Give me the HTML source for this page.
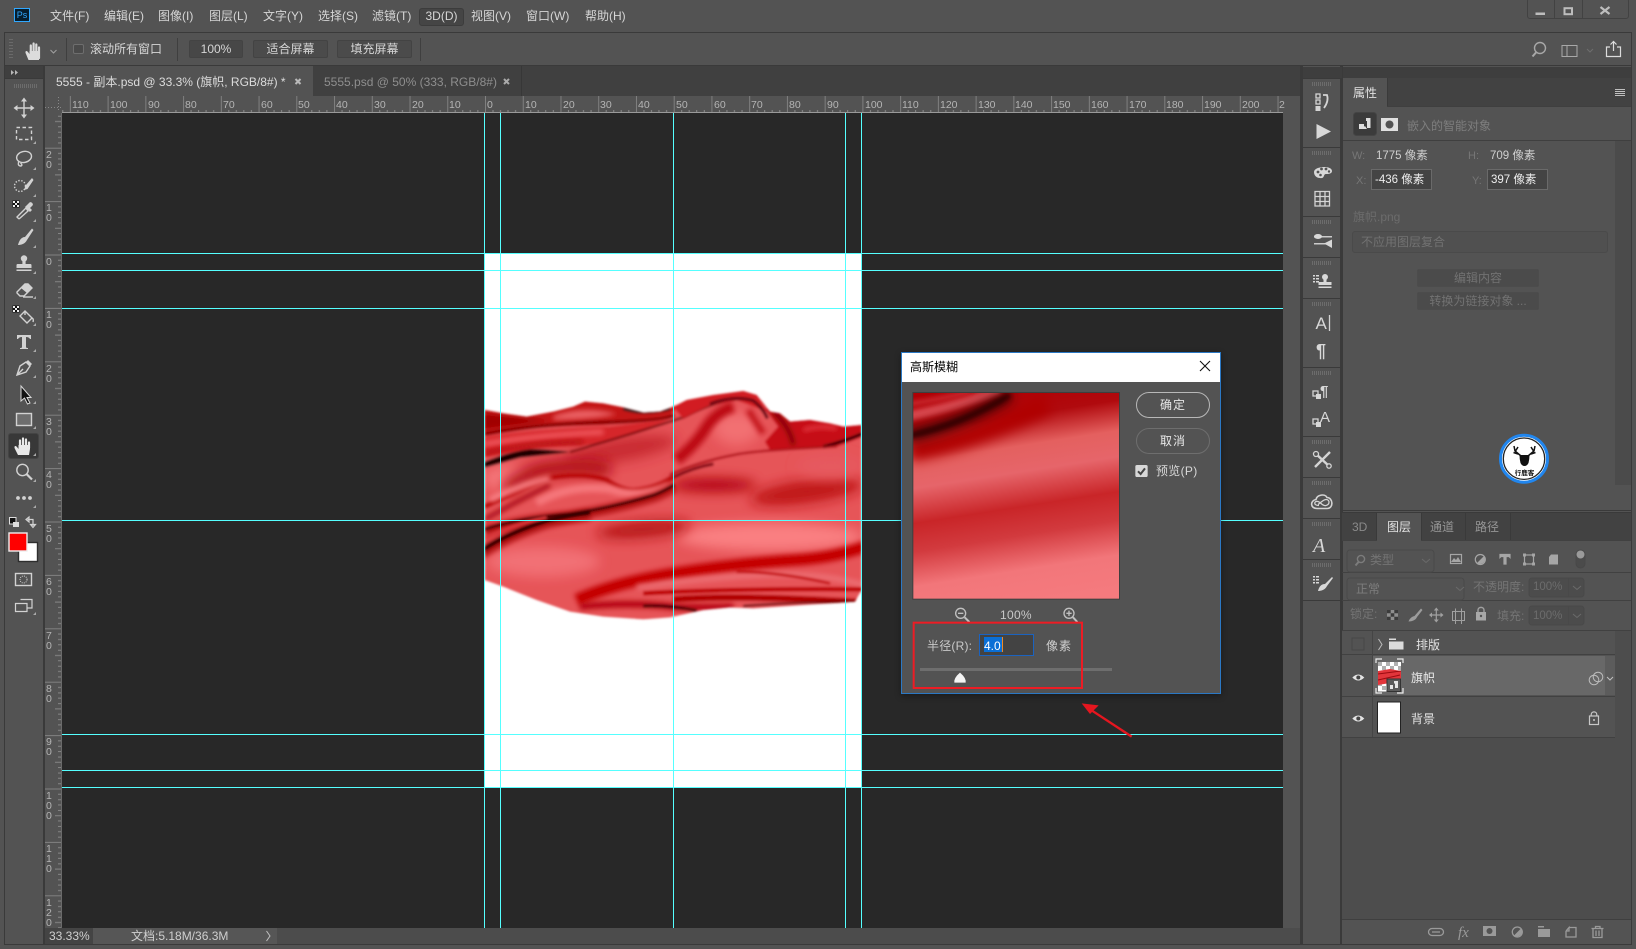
<!DOCTYPE html>
<html lang="zh"><head><meta charset="utf-8"><title>Photoshop</title>
<style>
html,body{margin:0;padding:0;background:#535353}
body{position:relative;width:1636px;height:949px;overflow:hidden;font:12px/16px "Liberation Sans","Noto Sans CJK SC",sans-serif;color:#d6d6d6}
div,span{position:absolute;box-sizing:border-box;white-space:nowrap}
.r{background:#3b3b3b}
.g{color:#767676}
.b{border:1px solid #434343;border-radius:2px;background:#474747;text-align:center;color:#d6d6d6}
svg{position:absolute;left:0;top:0}
text{font-family:"Liberation Sans","Noto Sans CJK SC",sans-serif}
</style></head><body>

<!-- frame regions -->
<div style="left:4px;top:32px;width:1628px;height:1px;background:#3a3a3a"></div>
<div style="left:4px;top:32px;width:1px;height:913px;background:#3a3a3a"></div>
<div style="left:1631px;top:32px;width:1px;height:913px;background:#3a3a3a"></div>
<div style="left:4px;top:944px;width:1628px;height:1px;background:#3a3a3a"></div>
<div style="left:4px;top:65px;width:1628px;height:1px;background:#3a3a3a"></div>

<!-- menu -->
<div style="left:14px;top:8px;width:16px;height:14px;background:#061e2e;border:1px solid #31a8ff;color:#31a8ff;font-size:9px;line-height:12px;text-align:center">Ps</div>
<span style="left:50px;top:8px">文件(F)</span>
<span style="left:104px;top:8px">编辑(E)</span>
<span style="left:158px;top:8px">图像(I)</span>
<span style="left:209px;top:8px">图层(L)</span>
<span style="left:263px;top:8px">文字(Y)</span>
<span style="left:318px;top:8px">选择(S)</span>
<span style="left:372px;top:8px">滤镜(T)</span>
<div style="left:419px;top:8px;width:45px;height:18px;background:#454545;border:1px solid #3c3c3c;border-radius:3px;text-align:center;line-height:15px">3D(D)</div>
<span style="left:471px;top:8px">视图(V)</span>
<span style="left:526px;top:8px">窗口(W)</span>
<span style="left:585px;top:8px">帮助(H)</span>
<div style="left:1527px;top:-2px;width:102px;height:21px;border:1px solid #424242;border-radius:3px"></div>
<div style="left:1554px;top:0;width:1px;height:19px;background:#424242"></div>
<div style="left:1582px;top:0;width:1px;height:19px;background:#424242"></div>

<!-- options -->
<span style="left:90px;top:41px">滚动所有窗口</span>
<div class="b" style="left:189px;top:40px;width:54px;height:18px;line-height:16px">100%</div>
<div class="b" style="left:253px;top:40px;width:75px;height:18px;line-height:16px;background:#4b4b4b">适合屏幕</div>
<div class="b" style="left:337px;top:40px;width:75px;height:18px;line-height:16px;background:#4b4b4b">填充屏幕</div>
<div style="left:73px;top:44px;width:11px;height:10px;border:1px solid #6e6e6e;border-radius:2px;background:#4a4a4a"></div>
<div class="r" style="left:66px;top:38px;width:1px;height:23px;background:#3f3f3f"></div>
<div class="r" style="left:177px;top:38px;width:1px;height:23px;background:#3f3f3f"></div>
<div class="r" style="left:420px;top:38px;width:1px;height:23px;background:#3f3f3f"></div>

<!-- left toolbar -->
<div style="left:5px;top:66px;width:38px;height:12px;background:#3f3f3f"></div>
<div style="left:43px;top:66px;width:2px;height:878px;background:#3a3a3a"></div>
<div style="left:5px;top:78px;width:38px;height:1px;background:#3a3a3a"></div>
<div style="left:8px;top:433px;width:31px;height:26px;background:#383838;border:1px solid #444;border-radius:3px"></div>

<!-- tabs -->
<div style="left:45px;top:66px;width:1257px;height:30px;background:#404040"></div>
<div style="left:45px;top:66px;width:268px;height:30px;background:#535353"></div>
<span style="left:56px;top:74px;color:#dcdcdc">5555 - 副本.psd @ 33.3% (旗帜, RGB/8#) *</span>
<span style="left:324px;top:74px;color:#8e8e8e">5555.psd @ 50% (333, RGB/8#)</span>
<div style="left:521px;top:66px;width:1px;height:30px;background:#373737"></div>

<!-- rulers & canvas -->
<div style="left:45px;top:96px;width:1257px;height:17px;background:#535353"></div>
<div style="left:45px;top:113px;width:17px;height:815px;background:#535353"></div>
<div style="left:62px;top:113px;width:1221px;height:815px;background:#282828"></div>
<div style="left:1283px;top:96px;width:19px;height:848px;background:#535353"></div>
<div style="left:1300px;top:66px;width:2px;height:878px;background:#3a3a3a"></div>
<!-- status -->
<div style="left:45px;top:928px;width:48px;height:16px;background:#444;color:#cfcfcf;line-height:16px;padding-left:4px">33.33%</div>
<div style="left:93px;top:928px;width:184px;height:16px;background:#565656"></div>
<div style="left:277px;top:928px;width:1023px;height:16px;background:#4c4c4c"></div>
<span style="left:131px;top:928px;color:#cfcfcf">文档:5.18M/36.3M</span>

<svg width="1636" height="949" viewBox="0 0 1636 949">
<defs>
<pattern id="hr" patternUnits="userSpaceOnUse" x="485" y="96" width="37.74" height="17">
<path d="M.5 0V17" stroke="#808080"/>
<path d="M8 14V17M15.5 14V17M23 14V17M30.6 14V17" stroke="#8c8c8c"/>
</pattern>
<pattern id="vr" patternUnits="userSpaceOnUse" x="45" y="254.5" width="17" height="53.4">
<path d="M0 .5H17" stroke="#808080"/>
<path d="M13 5.8H17M13 11.2H17M13 16.5H17M13 21.9H17M10 27.2H17M13 32.5H17M13 37.9H17M13 43.2H17M13 48.6H17" stroke="#858585"/>
</pattern>
<filter id="b0" filterUnits="userSpaceOnUse" x="-100" y="-100" width="1600" height="1200"><feGaussianBlur stdDeviation="3"/></filter>
<filter id="b1" filterUnits="userSpaceOnUse" x="-100" y="-100" width="1600" height="1200"><feGaussianBlur stdDeviation="2.5"/></filter>
<filter id="b2" filterUnits="userSpaceOnUse" x="-100" y="-100" width="1600" height="1200"><feGaussianBlur stdDeviation="7"/></filter>
<filter id="b3" filterUnits="userSpaceOnUse" x="-100" y="-100" width="1600" height="1200"><feGaussianBlur stdDeviation="18"/></filter>
<clipPath id="fc"><path d="M44 120L100 130 170 140 250 125 310 110 345 95 400 100 460 112 520 128 570 125 610 110 650 90 730 75 820 63 860 75 885 105 900 125 930 130 960 155 1020 150 1080 160 1120 170 1175 165V660L1155 695 1000 705 850 715 780 712 700 720 600 742 520 748 400 740 300 725 200 690 100 650 44 630Z"/></clipPath>
<clipPath id="dc"><rect x="44" y="0" width="1131" height="840"/></clipPath>
<clipPath id="pc"><rect x="68" y="157" width="621" height="621"/></clipPath>
<linearGradient id="pg" gradientUnits="userSpaceOnUse" x1="330" y1="150" x2="430" y2="790">
<stop offset="0" stop-color="#b00004"/><stop offset=".13" stop-color="#b00a0e"/><stop offset=".27" stop-color="#e4605f"/><stop offset=".39" stop-color="#e6656a"/><stop offset=".55" stop-color="#c92528"/><stop offset=".68" stop-color="#d23a3e"/><stop offset=".84" stop-color="#f2767a"/><stop offset="1" stop-color="#f57a7e"/>
</linearGradient>
</defs>

<!-- rulers -->
<rect x="62" y="96" width="1221" height="17" fill="url(#hr)"/>
<rect x="45" y="113" width="17" height="815" fill="url(#vr)"/>
<path d="M62 112.5H1283" stroke="#9a9a9a"/>
<path d="M61.5 113V928" stroke="#6a6a6a"/>
<path d="M45 107.5H61M58.5 97V112" stroke="#888" stroke-dasharray="1 2"/>
<g font-size="10.5" fill="#b4b4b4">
<text x="72" y="108">110</text><text x="110" y="108">100</text><text x="148" y="108">90</text><text x="185" y="108">80</text><text x="223" y="108">70</text><text x="261" y="108">60</text><text x="298" y="108">50</text><text x="336" y="108">40</text><text x="374" y="108">30</text><text x="412" y="108">20</text><text x="449" y="108">10</text><text x="487" y="108">0</text><text x="525" y="108">10</text><text x="563" y="108">20</text><text x="600" y="108">30</text><text x="638" y="108">40</text><text x="676" y="108">50</text><text x="714" y="108">60</text><text x="751" y="108">70</text><text x="789" y="108">80</text><text x="827" y="108">90</text><text x="865" y="108">100</text><text x="902" y="108">110</text><text x="940" y="108">120</text><text x="978" y="108">130</text><text x="1015" y="108">140</text><text x="1053" y="108">150</text><text x="1091" y="108">160</text><text x="1129" y="108">170</text><text x="1166" y="108">180</text><text x="1204" y="108">190</text><text x="1242" y="108">200</text><text x="1279" y="108">2</text>
</g>
<g font-size="10.5" fill="#b4b4b4">
<text x="46" y="158">2</text><text x="46" y="168">0</text>
<text x="46" y="211">1</text><text x="46" y="221">0</text>
<text x="46" y="265">0</text>
<text x="46" y="318">1</text><text x="46" y="328">0</text>
<text x="46" y="372">2</text><text x="46" y="382">0</text>
<text x="46" y="425">3</text><text x="46" y="435">0</text>
<text x="46" y="478">4</text><text x="46" y="488">0</text>
<text x="46" y="532">5</text><text x="46" y="542">0</text>
<text x="46" y="585">6</text><text x="46" y="595">0</text>
<text x="46" y="639">7</text><text x="46" y="649">0</text>
<text x="46" y="692">8</text><text x="46" y="702">0</text>
<text x="46" y="745">9</text><text x="46" y="755">0</text>
<text x="46" y="799">1</text><text x="46" y="809">0</text><text x="46" y="819">0</text>
<text x="46" y="852">1</text><text x="46" y="862">1</text><text x="46" y="872">0</text>
<text x="46" y="906">1</text><text x="46" y="916">2</text><text x="46" y="926">0</text>
</g>

<!-- document -->
<rect x="485" y="254" width="377" height="534" fill="#fff"/>
<g transform="translate(470 370) scale(.33333)" clip-path="url(#dc)">
<g filter="url(#b0)">
<g clip-path="url(#fc)">
<rect x="0" y="40" width="1200" height="720" fill="#e65458"/>
<!-- soft large tones -->
<ellipse cx="1010" cy="365" rx="170" ry="34" fill="#bf1418" filter="url(#b3)" transform="rotate(-8 1010 365)"/>
<ellipse cx="730" cy="345" rx="130" ry="20" fill="#b00408" filter="url(#b3)"/>
<ellipse cx="900" cy="500" rx="280" ry="42" fill="#fa8082" filter="url(#b3)"/>
<ellipse cx="220" cy="575" rx="170" ry="46" fill="#f27074" filter="url(#b3)"/>
<ellipse cx="520" cy="478" rx="140" ry="24" fill="#b51519" filter="url(#b3)" transform="rotate(-5 520 478)"/>
<ellipse cx="450" cy="240" rx="170" ry="34" fill="#c92a30" filter="url(#b3)" transform="rotate(-10 450 240)"/>
<ellipse cx="110" cy="325" rx="70" ry="36" fill="#f6787c" filter="url(#b3)"/>
<ellipse cx="1080" cy="290" rx="100" ry="36" fill="#e65a5e" filter="url(#b3)"/>
<ellipse cx="800" cy="175" rx="70" ry="50" fill="#f27072" filter="url(#b3)"/>
<!-- top stripes -->
<path d="M30 100H170L310 100 345 85 460 100 520 115 630 90 600 140 400 165 200 170 30 200Z" fill="#c41219" filter="url(#b1)"/>
<path d="M250 138Q340 105 440 132 380 148 250 150Z" fill="#ea6064" filter="url(#b2)"/>
<path d="M30 130L170 145 240 152 30 180Z" fill="#a00000" filter="url(#b2)"/>
<path d="M44 192Q200 162 400 157T610 134" stroke="#8a0006" stroke-width="10" fill="none" filter="url(#b1)"/>
<path d="M30 203Q200 175 420 170L600 148 520 182 380 222 200 234 30 264Z" fill="#d6262c" filter="url(#b1)"/>
<path d="M44 222Q200 196 400 186" stroke="#f0585e" stroke-width="16" fill="none" filter="url(#b2)"/>
<path d="M44 250Q170 218 340 216" stroke="#b4080e" stroke-width="13" fill="none" filter="url(#b2)"/>
<path d="M460 116Q520 136 600 116" stroke="#222" stroke-width="8" fill="none" filter="url(#b1)"/>
<!-- main dark crease -->
<path d="M300 246Q340 236 360 228 500 188 640 142 720 100 800 85" stroke="#7a0a10" stroke-width="6" fill="none" filter="url(#b1)"/>
<path d="M30 282Q110 247 180 238 220 238 300 246L150 262 30 296Z" fill="#1a0002" filter="url(#b1)"/>
<!-- hump -->
<path d="M610 112L650 88 730 72 820 60 860 72 892 125 800 90 720 105 640 145Z" fill="#d21a24" filter="url(#b1)"/>
<path d="M720 102Q790 75 850 92 880 115 892 145" stroke="#5c060c" stroke-width="8" fill="none" filter="url(#b1)"/>
<path d="M620 270Q680 220 710 170 740 125 790 110" stroke="#be0e14" stroke-width="34" fill="none" filter="url(#b2)"/>
<path d="M835 120Q860 160 880 190" stroke="#c4141a" stroke-width="20" fill="none" filter="url(#b2)"/>
<!-- right top -->
<path d="M885 115L930 122 960 150 1020 143 1080 153 1120 163 1190 158V195L1100 230 900 240 885 215 925 170Z" fill="#c60c14" filter="url(#b1)"/>
<path d="M1060 230Q1120 216 1190 186" stroke="#2a0306" stroke-width="8" fill="none" filter="url(#b1)"/>
<path d="M910 125Q960 170 970 225" stroke="#780006" stroke-width="12" fill="none" filter="url(#b2)"/>
<path d="M1000 180Q1050 165 1100 175" stroke="#e8424a" stroke-width="10" fill="none" filter="url(#b2)"/>
<path d="M600 314Q680 276 800 253 860 241 1100 229" stroke="#aa0c12" stroke-width="6" fill="none" filter="url(#b1)"/>
<path d="M610 322Q670 292 730 282" stroke="#7a060c" stroke-width="8" fill="none" filter="url(#b1)"/>
<!-- folds middle -->
<path d="M110 360Q180 300 250 295 350 285 420 300" stroke="#b00c12" stroke-width="44" fill="none" filter="url(#b3)"/>
<path d="M44 410Q130 370 230 325 340 305 410 330 450 358 490 360 560 355 610 320" stroke="#bc0a10" stroke-width="15" fill="none" filter="url(#b1)"/>
<path d="M60 390Q150 345 240 325" stroke="#f88084" stroke-width="18" fill="none" filter="url(#b2)"/>
<path d="M200 398Q300 342 420 357 500 387 600 347" stroke="#f6787c" stroke-width="24" fill="none" filter="url(#b2)"/>
<path d="M44 448Q130 400 240 345" stroke="#a0040a" stroke-width="12" fill="none" filter="url(#b2)"/>
<path d="M44 484Q140 450 300 438 430 418 550 382 580 371 612 351" stroke="#b00a10" stroke-width="28" fill="none" filter="url(#b2)"/>
<path d="M30 552Q110 497 230 458 300 442 360 434" stroke="#ac0a10" stroke-width="32" fill="none" filter="url(#b2)"/>
<path d="M44 478Q140 445 300 432 430 412 550 376 580 365 612 345" stroke="#3a0004" stroke-width="8" fill="none" filter="url(#b1)"/>
<path d="M30 545Q110 490 230 452 300 436 360 428" stroke="#300003" stroke-width="12" fill="none" filter="url(#b1)"/>
<path d="M44 505Q130 462 230 442" stroke="#d83438" stroke-width="10" fill="none" filter="url(#b1)"/>
<!-- bottom bands -->
<path d="M320 690Q430 640 600 612 800 580 1000 568 1100 560 1190 528" stroke="#c40006" stroke-width="36" fill="none" filter="url(#b2)"/>
<path d="M500 652Q700 622 900 614 1080 612 1190 648" stroke="#ec7074" stroke-width="16" fill="none" filter="url(#b2)"/>
<path d="M520 670Q800 655 1190 658" stroke="#bc0006" stroke-width="12" fill="none" filter="url(#b1)"/>
<path d="M800 605Q920 605 1080 640" stroke="#c00a10" stroke-width="7" fill="none" filter="url(#b1)"/>
<path d="M610 688Q800 674 1170 696" stroke="#b00006" stroke-width="18" fill="none" filter="url(#b1)"/>
<path d="M330 710Q480 695 610 710 700 714 790 710" stroke="#b40008" stroke-width="20" fill="none" filter="url(#b2)"/>
<path d="M520 708Q600 705 680 722" stroke="#400002" stroke-width="8" fill="none" filter="url(#b1)"/>
<path d="M820 708Q980 696 1155 694" stroke="#500004" stroke-width="5" fill="none" filter="url(#b1)"/>
</g>
</g>
</g>

<!-- guides -->
<g stroke="#55ffff" stroke-width="1" shape-rendering="crispEdges">
<path d="M62 253.5H1283M62 270.5H1283M62 308.5H1283M62 520.5H1283M62 734.5H1283M62 770.5H1283M62 787.5H1283"/>
<path d="M484.5 113V928M500.5 113V928M673.5 113V928M845.5 113V928M861.5 113V928"/>
</g>

<!-- status chevron -->
<path d="M266.5 931L270 936 266.5 941" fill="none" stroke="#c0c0c0"/>

<!-- tab closes + option icons -->
<g stroke="#b9b9b9" stroke-width="2"><path d="M295.5 79L300.5 84M300.5 79L295.5 84"/></g>
<g stroke="#aaa" stroke-width="2"><path d="M504 79L509 84M509 79L504 84"/></g>

<!-- hand option -->
<g transform="translate(34 51)" fill="#dcdcdc" stroke="#dcdcdc">
<path d="M-5.5 9L-8 3C-9.5 0-7.5-1-6 1L-4.5 3V0H5V9Z" stroke="none"/>
<path d="M-3.2 3V-5.5M-.4 3V-7.5M2.3 3V-6.5M5 3V-3.5M5 3V7" stroke-width="2.2" stroke-linecap="round" fill="none"/>
</g>
<path d="M50.5 50L53.5 53L56.5 50" fill="none" stroke="#a0a0a0"/>
<path d="M11 39V60" stroke="#6a6a6a" stroke-width="4" stroke-dasharray="1 2"/>
<g fill="none" stroke="#a8a8a8" stroke-width="1.4">
<circle cx="1540" cy="48" r="5.5"/><path d="M1536 52.5L1532.5 56.5" stroke-width="2"/>
</g>
<path d="M1562 45.5H1577V56.5H1562ZM1567 45.5V56.5" fill="none" stroke="#a8a8a8"/>
<path d="M1587 49L1590 52L1593 49" fill="none" stroke="#6e6e6e"/>
<path d="M1610 47H1606.5V56.5H1620.5V47H1617M1613.5 51V41.5M1610.5 44.5L1613.5 41.5L1616.5 44.5" fill="none" stroke="#dcdcdc" stroke-width="1.2"/>
<!-- window controls -->
<rect x="1535.5" y="12.5" width="9.5" height="2.5" fill="#bdbdbd"/>
<rect x="1564.5" y="8.2" width="7.5" height="6" fill="none" stroke="#bdbdbd" stroke-width="2"/>
<path d="M1600.5 7L1609.5 14M1609.5 7L1600.5 14" stroke="#bdbdbd" stroke-width="2.2"/>

<!-- collapse arrows -->
<g fill="#b8b8b8">
<path d="M11 70l3 2.5-3 2.5zM15 70l3 2.5-3 2.5z"/>
<path d="M1333 70l-3 2.5 3 2.5zM1328.5 70l-3 2.5 3 2.5z"/>
<path d="M1618 70l3 2.5-3 2.5zM1622 70l3 2.5-3 2.5z"/>
</g>
<!-- toolbar gripper -->
<path d="M14 86H38" stroke="#6c6c6c" stroke-width="4" stroke-dasharray="1 1"/>

<!-- TOOLBAR ICONS -->
<g fill="none" stroke="#d2d2d2" stroke-width="1.4">
<g transform="translate(24 108)"><path d="M0-8V8M-8 0H8"/><path d="M0-10.5L-3-6.5H3ZM0 10.5L-3 6.5H3ZM-10.5 0L-6.5-3V3ZM10.5 0L6.5-3V3Z" fill="#d2d2d2" stroke="none"/></g>
<rect x="16.5" y="127.5" width="15" height="12" stroke-dasharray="3.5 2.5"/>
<g transform="translate(24 159)"><ellipse cx=".5" cy="-2" rx="7.5" ry="5.5" transform="rotate(-12)"/><path d="M-5 2Q-7 7-3 7-1 6-3.5 4"/></g>
<g transform="translate(24 186)"><circle cx="-4" cy="0" r="5.5" stroke-dasharray="1.4 1.6"/><path d="M8-8L2-1 0 4 3.5 3 9.5-6Z" fill="#d2d2d2" stroke="none"/></g>
<g transform="translate(24 211)"><path d="M-5 8L-7 6 2-3 4 0 -5 8" /><path d="M1-4L3-6 5.5-8.5C7-10 10-7 8.5-5.5L6-3 8 -1 6 1 -1-6Z" fill="#d2d2d2" stroke="none"/></g>
<g transform="translate(24 238)"><path d="M8-9.5L1-1C-3-1-5 3-6 7-3 7 1 6 3 2L9.5-8Z" fill="#d2d2d2" stroke="none"/></g>
<g transform="translate(24 264)" fill="#d2d2d2" stroke="none"><circle cx="0" cy="-5.5" r="3.2"/><path d="M-1.6-3V0H-6.5Q-7.5 0-7.5 1.5V4H7.5V1.5Q7.5 0 6.5 0H1.6V-3ZM-7.5 5.5H7.5V7H-7.5Z"/></g>
<g transform="translate(24 290)"><path d="M-7 2L1-6H4L8-2 0 6H-4L-7 3Z"/><path d="M1-6H4L8-2 3 3-3-2Z" fill="#d2d2d2" stroke="none"/><path d="M-1 7H9"/></g>
<g transform="translate(24 316)"><path d="M-4 0L1-5 8 2 3 7Z"/><path d="M1-5V-1M8 2Q10 3 9 6"/></g>
<g transform="translate(16 309)"><rect x="-3.5" y="-3.5" width="7" height="7" fill="#111" stroke="none"/><path d="M-3-3h2v2h-2zM1-3h2v2h-2zM-1-1h2v2h-2zM-3 1h2v2h-2zM1 1h2v2h-2z" fill="#eee" stroke="none"/></g>
<g transform="translate(16 204)"><rect x="-3.5" y="-3.5" width="7" height="7" fill="#111" stroke="none"/><path d="M-3-3h2v2h-2zM1-3h2v2h-2zM-1-1h2v2h-2zM-3 1h2v2h-2zM1 1h2v2h-2z" fill="#eee" stroke="none"/></g>
<g transform="translate(24 342)"><path d="M-7-7H7V-3H6Q5-5 2-5V5Q2 6 4 6V7H-4V6Q-2 6-2 5V-5Q-5-5-6-3H-7Z" fill="#d2d2d2" stroke="none"/></g>
<g transform="translate(24 368)"><path d="M-7 7L-4 -2 2-6 6-2 2 4Z"/><path d="M2-6L4-8 8-4 6-2Z" fill="#d2d2d2" stroke="none"/><path d="M-7 7L-1 1"/></g>
<path d="M21 386V401L24.5 398 27.5 404 30 403 27 397.5H31Z" fill="#111" stroke="#d8d8d8" stroke-width="1"/>
<rect x="16.5" y="413.5" width="15" height="12" fill="#6e6e6e"/>
<g transform="translate(24 446)"><path d="M-6 9L-9 3C-10.5 0-8.5-1-7 1L-5.5 3V-1H6V3L5 9Z" fill="#e8e8e8" stroke="none"/><path d="M-4 2V-5.5M-1-1V-7.5M2-1V-6.5M5 2V-3.5" stroke="#e8e8e8" stroke-width="2.2" stroke-linecap="round"/></g>
<g transform="translate(24 471.5)"><circle cx="-1.5" cy="-1.5" r="5.7"/><path d="M2.5 2.5L8 8" stroke-width="2.2"/></g>
<g fill="#d2d2d2" stroke="none"><circle cx="18" cy="498" r="1.9"/><circle cx="24" cy="498" r="1.9"/><circle cx="30" cy="498" r="1.9"/></g>
<!-- corner triangles -->
<g fill="#aaa" stroke="none"><path d="M33 144h3v-3zM33 170h3v-3zM33 197h3v-3zM33 222h3v-3zM33 248h3v-3zM33 274h3v-3zM33 299h3v-3zM33 326h3v-3zM33 352h3v-3zM33 378h3v-3zM33 404h3v-3zM33 429h3v-3zM33 456h3v-3zM33 482h3v-3zM33 508h3v-3zM33 615h3v-3z"/></g>
<rect x="9.5" y="517.5" width="6.5" height="6.5" fill="#111" stroke="#ddd" stroke-width="1"/>
<rect x="13" y="522" width="6" height="5" fill="#ddd" stroke="none"/>
<path d="M27.5 519.5H33V526M26 519.5l3-2.5v5zM33 527.5l-2.5-3h5z" stroke-width="1.2"/>
<!-- colours -->
<rect x="18.5" y="542.5" width="19" height="19" fill="#fff" stroke="#2e2e2e"/>
<rect x="9" y="533" width="18" height="18" fill="#f00" stroke="#eee" stroke-width="1.4"/>
<rect x="15.5" y="573.5" width="16" height="12" stroke="#d2d2d2"/><circle cx="23.5" cy="579.5" r="3.5" stroke-dasharray="1 1.1" stroke-width="1"/>
<path d="M20.5 599.5H32V608H27.5M15.5 603.5H27V611.5H15.5Z" stroke-width="1.2"/>
</g>

<!-- RIGHT STRIP -->
<g stroke="#3a3a3a"><path d="M1302 78.5H1342M1302 147.5H1341M1302 216.5H1341M1302 257.5H1341M1302 298.5H1341M1302 367.5H1341M1302 436.5H1341M1302 477.5H1341M1302 518.5H1341M1302 559.5H1341M1302 600.5H1341"/><path d="M1341 66V944" stroke-width="2"/><path d="M1302.5 66V944"/></g>
<rect x="1303" y="67" width="328" height="11" fill="#3e3e3e"/>
<path d="M1312 84H1331M1312 153H1331M1312 222H1331M1312 263H1331M1312 304H1331M1312 373H1331M1312 442H1331M1312 483H1331M1312 524H1331M1312 565H1331" stroke="#6c6c6c" stroke-width="4" stroke-dasharray="1 1"/>
<g fill="none" stroke="#d4d4d4" stroke-width="1.3">
<g transform="translate(1322 102)"><rect x="-6" y="-8" width="4" height="4"/><rect x="-6" y="-2" width="4" height="4"/><rect x="-6.5" y="4" width="5" height="5" fill="#d4d4d4" stroke="none"/><path d="M1-7H5Q7-1 2 6"  stroke-width="1.8"/></g>
<path d="M1316.5 124L1331 131.5 1316.5 139Z" fill="#d8d8d8" stroke="none"/>
<g transform="translate(1323 172)"><path d="M-9 0C-9-6 9-7 9-1 9 2 5 2 3 2 0 2 2 7-3 6-7 6-9 3-9 0Z" fill="#d8d8d8" stroke="none"/><g fill="#535353" stroke="none"><circle cx="-5" cy="0" r="1.4"/><circle cx="-1.5" cy="-3" r="1.4"/><circle cx="3" cy="-3" r="1.4"/><circle cx="6" cy="-.5" r="1.2"/><circle cx="-2.5" cy="3" r="1.3"/></g></g>
<path d="M1315 191.5H1329.5V206H1315ZM1315 196.5H1329.5M1315 201.5H1329.5M1320 191.5V206M1325 191.5V206"/>
<g transform="translate(1323 240)" fill="#d8d8d8" stroke="none"><path d="M-9-4H9V-2.5H-9ZM-9 3H9V4.5H-9Z" opacity=".9"/><ellipse cx="-5" cy="-3.5" rx="4" ry="2.5"/><path d="M1 3.5L9 -.5V8Z"/></g>
<g transform="translate(1325 281)" fill="#d8d8d8" stroke="none"><circle cx="0" cy="-4" r="3"/><path d="M-1.5-2V1H-6.5V4H6.5V1H1.5V-2ZM-6.5 5.5H6.5V7H-6.5Z"/><path d="M-12-6h2v1.5h-2zM-9-6h3v1.5h-3zM-12-3h2v1.5h-2zM-9-3h3v1.5h-3zM-12 0h2v1.5h-2zM-9 0h3v1.5h-3z"/></g>
<text x="1315.5" y="329" font-size="17" fill="#d8d8d8" stroke="none">A</text><path d="M1329.5 315V331" />
<text x="1316" y="357" font-size="18" font-weight="bold" fill="#d8d8d8" stroke="none">¶</text>
<g transform="translate(1322 391)"><rect x="-9" y="0" width="5" height="5"/><rect x="-6" y="3" width="5" height="5" fill="#d8d8d8" stroke="none"/><text x="-2" y="5" font-size="15" font-weight="bold" fill="#d8d8d8" stroke="none">¶</text></g>
<g transform="translate(1322 419)"><rect x="-9" y="0" width="5" height="5"/><rect x="-6" y="3" width="5" height="5" fill="#d8d8d8" stroke="none"/><text x="-2" y="3" font-size="15" fill="#d8d8d8" stroke="none">A</text></g>
<g transform="translate(1322 460)"><path d="M-7-7L8 7M8-8L-7 7" stroke-width="2.4"/><circle cx="-6" cy="-6" r="2.5" fill="#535353"/><circle cx="7" cy="6" r="2.2" fill="#535353"/></g>
<g transform="translate(1322 501.5)"><path d="M-5 7C-12 7-12-1-6-2-5-7 3-8 5-4 11-4 12 7 5 7Z" stroke-width="1.6"/><path d="M-3 4C-9 4-8-1-4 0-1 1 1 5 4 4 8 3 8-2 4-2 1-2-2 2-4 3" stroke-width="1.3"/></g>
<text x="1313" y="552" font-size="20" font-style="italic" fill="#d8d8d8" stroke="none" style="font-family:'Liberation Serif',serif">A</text>
<g transform="translate(1323 584)" fill="#d8d8d8" stroke="none"><path d="M9-7L2 0C-2 0-4 3-5 7-2 7 2 6 4 2L10-6Z"/><path d="M-10-8h2v1.5h-2zM-7-8h3v1.5h-3zM-10-5h2v1.5h-2zM-7-5h3v1.5h-3zM-10-2h2v1.5h-2zM-7-2h3v1.5h-3z"/></g>
</g>

<!-- panels BG -->
<rect x="1342" y="78" width="289" height="28" fill="#424242"/>
<rect x="1342" y="78" width="45" height="28" fill="#535353"/>
<path d="M1387.5 78V106" stroke="#3a3a3a"/>
<path d="M1387 106.5H1631M1342 140.5H1631" stroke="#3f3f3f"/>
<rect x="1342" y="141" width="273" height="369" fill="#535353"/>
<rect x="1615" y="141" width="16" height="344" fill="#4b4b4b"/>
<path d="M1342 510.5H1631M1342 512.5H1631" stroke="#3a3a3a"/>
<path d="M1342.5 66V944" stroke="#3a3a3a"/>

<!-- prop icons -->
<rect x="1353.5" y="112.5" width="23" height="23" rx="3" fill="#3b3b3b" stroke="#444"/>
<g fill="#dedede"><path d="M1366 118H1370.5V128H1367V121H1366ZM1359 124H1364V129H1359ZM1365 126L1367 129H1361Z"/></g>
<rect x="1381" y="118" width="17" height="13" fill="#e0e0e0"/><circle cx="1389.5" cy="124.5" r="4" fill="#535353"/>
<path d="M1615 89.5H1625M1615 91.5H1625M1615 93.5H1625M1615 95.5H1625" stroke="#c0c0c0"/>
<path d="M1615 523.5H1625M1615 525.5H1625M1615 527.5H1625M1615 529.5H1625" stroke="#c0c0c0"/>
<path d="M1594 242L1600 247 1606 242" transform="translate(-1 -1)" fill="none" stroke="#646464"/>
<!-- logo -->
<circle cx="1524" cy="458.7" r="23.5" fill="#fff" stroke="#2186ee" stroke-width="3"/>
<circle cx="1524" cy="458.7" r="20.7" fill="none" stroke="#222" stroke-width="1.3"/>
<g stroke="#111" stroke-width="1.5" fill="none"><path d="M1521 456L1515 451 1514 446M1518 454L1513.5 452.5M1515.5 451L1518 447"/><path d="M1528 456L1534 451 1535 446M1531 454L1535.5 452.5M1533.5 451L1531 447"/></g>
<path d="M1519.5 455H1529.5Q1529.5 459 1528.5 463 1527 466 1524.5 466 1522 466 1520.5 463 1519.5 459 1519.5 455Z" fill="#111"/>
<text x="1524.5" y="475" font-size="6.5" font-weight="bold" text-anchor="middle" fill="#111" style="font-family:'Noto Sans CJK SC',sans-serif">行鹿客</text>

<!-- layers panel -->
<rect x="1342" y="513" width="289" height="27" fill="#424242"/>
<rect x="1377" y="513" width="44" height="28" fill="#535353"/>
<path d="M1376.5 513V540M1421.5 513V540M1465.5 513V540M1510.5 513V540" stroke="#3a3a3a"/>
<path d="M1342 540.5H1377M1421 540.5H1631M1342 572.5H1631M1342 600.5H1631M1342 630.5H1631" stroke="#414141"/>
<rect x="1342" y="631" width="289" height="288" fill="#4d4d4d"/>
<rect x="1342" y="631" width="273" height="106" fill="#535353"/>
<path d="M1342 654.5H1615M1342 696.5H1615M1342 737.5H1615" stroke="#414141"/>
<path d="M1372.5 631V737" stroke="#454545"/>
<rect x="1373" y="656" width="232" height="39" fill="#686868"/>
<rect x="1605" y="656" width="10" height="39" fill="#5c5c5c"/>
<rect x="1342" y="919" width="289" height="25" fill="#535353"/>
<path d="M1342 919.5H1631" stroke="#3f3f3f"/>
<rect x="1347" y="550" width="87" height="22" rx="3" fill="#535353" stroke="#4a4a4a"/>
<rect x="1347" y="578" width="117" height="22" rx="3" fill="#535353" stroke="#4a4a4a"/>
<path d="M1422 559L1426 562.5 1430 559M1456 587L1460 590.5 1464 587" fill="none" stroke="#6a6a6a"/>
<g fill="none" stroke="#7c7c7c" stroke-width="1.4"><circle cx="1361" cy="559" r="3.6"/><path d="M1358.5 562L1355.5 565.5" stroke-width="2"/></g>
<rect x="1529" y="578" width="55" height="19" rx="3" fill="#4c4c4c" stroke="#494949"/>
<rect x="1529" y="606" width="55" height="19" rx="3" fill="#4c4c4c" stroke="#494949"/>
<path d="M1568.5 578V597M1568.5 606V625" stroke="#494949"/>
<path d="M1573 586L1577 589.5 1581 586M1573 614L1577 617.5 1581 614" fill="none" stroke="#6a6a6a"/>
<g fill="none" stroke="#a6a6a6" stroke-width="1.2">
<rect x="1450.5" y="554.5" width="11" height="9"/><path d="M1451 562L1454 558 1456 560 1458 557 1461 562Z" fill="#a6a6a6" stroke="none"/>
<circle cx="1480.3" cy="559.5" r="5"/><path d="M1484 556A5 5 0 0 1 1477 563Z" fill="#a6a6a6" stroke="none"/>
<path d="M1500 554.5H1510V557.5L1509 556.5H1506V564H1504V556.5H1501L1500 557.5Z" fill="#a6a6a6" stroke="#a6a6a6"/>
<rect x="1524.5" y="555" width="9" height="9"/><path d="M1523 553.5h3v3h-3zM1532 553.5h3v3h-3zM1523 562.5h3v3h-3zM1532 562.5h3v3h-3z" fill="#a6a6a6" stroke="none"/>
<path d="M1551 554.5H1558V564.5H1549V557ZM1549 560H1553V564.5H1549Z" fill="#a6a6a6" stroke="none"/>
</g>
<rect x="1576" y="550" width="9" height="18" rx="4.5" fill="#4b4b4b" stroke="#484848"/><circle cx="1580.5" cy="554.5" r="4" fill="#9a9a9a"/>
<!-- lock icons -->
<g stroke="#a0a0a0" fill="none">
<rect x="1387" y="610" width="11" height="10" fill="#8e8e8e" stroke="none"/><path d="M1387 610h3.7v3.3h-3.7zM1394.3 610h3.7v3.3h-3.7zM1390.7 613.3h3.6v3.4h-3.6zM1387 616.7h3.7v3.3h-3.7zM1394.3 616.7h3.7v3.3h-3.7z" fill="#3b3b3b" stroke="none"/>
<path d="M1421 608.5L1414.5 616C1411 617 1409.5 619 1408.5 621.5 1412 621.5 1416 620 1417 617L1422.5 610Z" fill="#9c9c9c" stroke="none"/>
<path d="M1436.3 609V621M1430.5 615H1442" stroke-width="1.2"/><path d="M1436.3 607.5l-2.5 3h5zM1436.3 622.5l-2.5-3h5zM1429 615l3-2.5v5zM1443.5 615l-3-2.5v5z" fill="#a0a0a0" stroke="none"/>
<path d="M1452.5 611.5H1464.5V620.5H1452.5ZM1455.5 608.5V624M1461.5 608.5V624" stroke-width="1"/>
<path d="M1478 612V610C1478 606.5 1484 606.5 1484 610V612" stroke-width="1.4"/><rect x="1476" y="612" width="10" height="8.5" fill="#a8a8a8" stroke="none"/><circle cx="1481" cy="616" r="1.2" fill="#535353" stroke="none"/>
</g>
<!-- layer rows -->
<rect x="1352" y="638" width="12" height="12" fill="none" stroke="#474747"/>
<path d="M1378.5 639L1382 644.5 1378.5 650" fill="none" stroke="#bcbcbc"/>
<path d="M1389 641.5H1403.5V649.5H1389ZM1389 638.5H1396V640H1389Z" fill="#dcdcdc"/>
<!-- thumb -->
<rect x="1378" y="662" width="23" height="29.5" fill="#fff"/>
<path d="M1378 662h4v4h-4zM1386 662h4v4h-4zM1394 662h4v4h-4zM1382 666h4v4h-4zM1390 666h4v4h-4zM1398 666h3v4h-3zM1378 682h4v4h-4zM1382 686h4v4h-4z" fill="#b0b0b0"/>
<path d="M1378 671L1390 669 1401 671 1401 681 1390 683 1378 685Z" fill="#e2353b"/>
<path d="M1378 674L1401 671M1378 680L1400 675" stroke="#9a0a10" stroke-width="1"/>
<rect x="1387" y="679" width="13.5" height="12.5" fill="#5c5c5c" stroke="#333"/>
<path d="M1394 681H1398V688H1395V683.5H1394ZM1390 685H1393V689H1390Z" fill="#e8e8e8"/>
<path d="M1376 663V659H1382M1397 659H1403V663M1403 688V693H1397M1382 693H1376V688" fill="none" stroke="#eee" stroke-width="1.2"/>
<circle cx="1594" cy="680" r="4.8" fill="none" stroke="#bcbcbc"/><circle cx="1598" cy="677" r="4.8" fill="none" stroke="#bcbcbc"/>
<path d="M1607 677L1610 680 1613 677" fill="none" stroke="#c0c0c0"/>
<g transform="translate(1358.3 677.5)"><path d="M-6 0Q0-6 6 0 0 6-6 0Z" fill="#e4e4e4"/><circle cx="0" cy="0" r="2" fill="#444"/></g>
<g transform="translate(1358.3 718.5)"><path d="M-6 0Q0-6 6 0 0 6-6 0Z" fill="#e4e4e4"/><circle cx="0" cy="0" r="2" fill="#444"/></g>
<rect x="1377.5" y="702" width="23" height="31" fill="#fff" stroke="#222"/>
<g transform="translate(1594 719)"><path d="M-2.8-3V-4.5C-2.8-8 2.8-8 2.8-4.5V-3" fill="none" stroke="#c8c8c8" stroke-width="1.2"/><rect x="-4.5" y="-3" width="9" height="8.5" fill="none" stroke="#c8c8c8" stroke-width="1.2"/><circle cx="0" cy="1" r="1" fill="#c8c8c8"/></g>
<!-- bottom bar icons -->
<g fill="none" stroke="#9a9a9a" stroke-width="1.3">
<path d="M1437 928.5H1432A3.4 3.4 0 0 0 1432 935.5H1437M1435 928.5H1440A3.4 3.4 0 0 1 1440 935.5H1435M1432 932H1440"/>
<text x="1458" y="937" font-size="15" font-style="italic" fill="#9a9a9a" stroke="none" style="font-family:'Liberation Serif',serif">fx</text>
<rect x="1483" y="926" width="13" height="10" fill="#9a9a9a" stroke="none"/><circle cx="1489.5" cy="931" r="3" fill="#535353" stroke="none"/>
<circle cx="1517.3" cy="932" r="5"/><path d="M1521 928.5A5 5 0 0 1 1514 935.5Z" fill="#9a9a9a" stroke="none"/>
<path d="M1538 929H1550V937H1538ZM1538 926H1544V927.5H1538Z" fill="#9a9a9a" stroke="none"/>
<path d="M1569 927.5H1576V937H1566V931M1566 931H1569V927.5L1566 931"/>
<path d="M1593 929V937.5H1602V929M1591.5 928.5H1603.5M1595.5 928V926.5H1600V928M1596 930.5V936M1599 930.5V936"/>
</g>
</svg>

<!-- props text -->
<span style="left:1353px;top:85px;color:#e0e0e0">属性</span>
<span class="g" style="left:1407px;top:118px;color:#7e7e7e">嵌入的智能对象</span>
<span style="left:1352px;top:148px;color:#767676;font-size:11px">W:</span>
<span style="left:1376px;top:148px;color:#cfcfcf;font-size:11.5px">1775 像素</span>
<span style="left:1468px;top:148px;color:#767676;font-size:11px">H:</span>
<span style="left:1490px;top:148px;color:#cfcfcf;font-size:11.5px">709 像素</span>
<span style="left:1356px;top:173px;color:#767676;font-size:11px">X:</span>
<div style="left:1371px;top:169px;width:61px;height:21px;background:#444;border:1px solid #6a6a6a;line-height:21px;padding-left:3px;color:#eee;font-size:11.5px">-436 像素</div>
<span style="left:1472px;top:173px;color:#767676;font-size:11px">Y:</span>
<div style="left:1487px;top:169px;width:61px;height:21px;background:#444;border:1px solid #6a6a6a;line-height:21px;padding-left:3px;color:#eee;font-size:11.5px">397 像素</div>
<span style="left:1353px;top:209px;color:#6c6c6c">旗帜.png</span>
<div style="left:1352px;top:231px;width:256px;height:22px;border:1px solid #4a4a4a;border-radius:3px;background:#505050;padding-left:8px;line-height:20px;color:#727272">不应用图层复合</div>
<div style="left:1417px;top:269px;width:122px;height:18px;border:1px solid #4c4c4c;border-radius:2px;background:#4b4b4b;text-align:center;line-height:16px;color:#727272">编辑内容</div>
<div style="left:1417px;top:292px;width:122px;height:18px;border:1px solid #4c4c4c;border-radius:2px;background:#4b4b4b;text-align:center;line-height:16px;color:#727272">转换为链接对象 ...</div>

<!-- layers text -->
<span style="left:1352px;top:519px;color:#8a8a8a">3D</span>
<span style="left:1387px;top:519px;color:#e2e2e2">图层</span>
<span style="left:1430px;top:519px;color:#959595">通道</span>
<span style="left:1475px;top:519px;color:#959595">路径</span>
<span style="left:1370px;top:552px;color:#747474">类型</span>
<span style="left:1356px;top:581px;color:#7e7e7e">正常</span>
<span style="left:1473px;top:579px;color:#747474">不透明度:</span>
<span style="left:1533px;top:579px;color:#6c6c6c;font-size:11.5px">100%</span>
<span style="left:1350px;top:606px;color:#747474">锁定:</span>
<span style="left:1497px;top:608px;color:#747474">填充:</span>
<span style="left:1533px;top:608px;color:#6c6c6c;font-size:11.5px">100%</span>
<span style="left:1416px;top:637px;color:#e2e2e2">排版</span>
<span style="left:1411px;top:670px;color:#eee">旗帜</span>
<span style="left:1411px;top:711px;color:#e2e2e2">背景</span>

<!-- DIALOG -->
<div style="left:901px;top:352px;width:320px;height:342px;background:#535353;border:1px solid #2b78c4;box-shadow:0 2px 6px rgba(0,0,0,.35)"></div>
<div style="left:902px;top:353px;width:318px;height:29px;background:#fff"></div>
<span style="left:910px;top:359px;color:#000">高斯模糊</span>
<div style="left:1136px;top:392px;width:74px;height:26px;border:1.5px solid #b8b8b8;border-radius:13px;text-align:center;line-height:25px;color:#e8e8e8;letter-spacing:1px">确定</div>
<div style="left:1136px;top:428px;width:74px;height:26px;border:1.5px solid #6e6e6e;border-radius:13px;text-align:center;line-height:25px;color:#e8e8e8;letter-spacing:1px">取消</div>
<span style="left:1156px;top:463px;color:#d8d8d8;letter-spacing:.3px">预览(P)</span>
<span style="left:1000px;top:607px;color:#c8c8c8;letter-spacing:.3px">100%</span>
<span style="left:927px;top:638px;color:#c8c8c8;letter-spacing:.2px">半径(R):</span>
<div style="left:979px;top:634px;width:55px;height:22px;background:#434343;border:1px solid #1b63c0"></div>
<div style="left:984px;top:637px;width:18px;height:15px;background:#0a6fd6"></div>
<span style="left:984px;top:638px;color:#fff">4.0</span>
<div style="left:1002px;top:637px;width:1px;height:15px;background:#f08a24"></div>
<span style="left:1046px;top:638px;color:#d0d0d0;letter-spacing:1px">像素</span>
<div style="left:920px;top:668px;width:192px;height:3px;background:#6e6e6e"></div>

<svg width="1636" height="949" viewBox="0 0 1636 949" style="pointer-events:none">
<path d="M1200 361L1210 371M1210 361L1200 371" stroke="#111" stroke-width="1.1"/>
<g transform="translate(890 340) scale(.33333)">
<g clip-path="url(#pc)">
<rect x="68" y="157" width="621" height="621" fill="url(#pg)"/>
<path d="M60 335Q260 300 470 190" stroke="#b00006" stroke-width="60" fill="none" filter="url(#b3)"/>
<path d="M55 228Q200 198 330 150" stroke="#d6444c" stroke-width="30" fill="none" filter="url(#b2)"/>
<path d="M60 192Q150 178 240 155" stroke="#c8282e" stroke-width="16" fill="none" filter="url(#b2)"/>
<path d="M55 288Q210 255 360 165" stroke="#2a0000" stroke-width="30" fill="none" filter="url(#b3)"/>
<path d="M55 288Q210 255 360 165" stroke="#2a0000" stroke-width="14" fill="none" filter="url(#b2)"/>
</g>
<rect x="68.5" y="157.5" width="620" height="620" fill="none" stroke="#3e3e3e" stroke-width="3"/>
<!-- checkbox -->
<rect x="736" y="375" width="37" height="36" rx="5" fill="#d8d8d8"/>
<path d="M744 394L752 402 765 385" stroke="#444" stroke-width="6" fill="none"/>
<!-- zoom icons -->
<g fill="none" stroke="#c0c0c0" stroke-width="4">
<circle cx="212" cy="820" r="15"/><path d="M224 832L238 846" stroke-width="6"/><path d="M204 820H220"/>
<circle cx="537" cy="820" r="15"/><path d="M549 832L562 846" stroke-width="6"/><path d="M529 820H545M537 812V828"/>
</g>
<!-- slider thumb -->
<path d="M193 1028Q191 1014 210 998 229 1014 227 1028Z" fill="#f4f4f4"/>
<!-- red box -->
<rect x="71" y="848" width="505" height="196" fill="none" stroke="#ed1c24" stroke-width="6"/>
<!-- arrow -->
<path d="M725 1190L600 1108" stroke="#e5161f" stroke-width="7"/>
<path d="M575 1090L626 1096 600 1122Z" fill="#e5161f"/>
</g>
</svg>
</body></html>
